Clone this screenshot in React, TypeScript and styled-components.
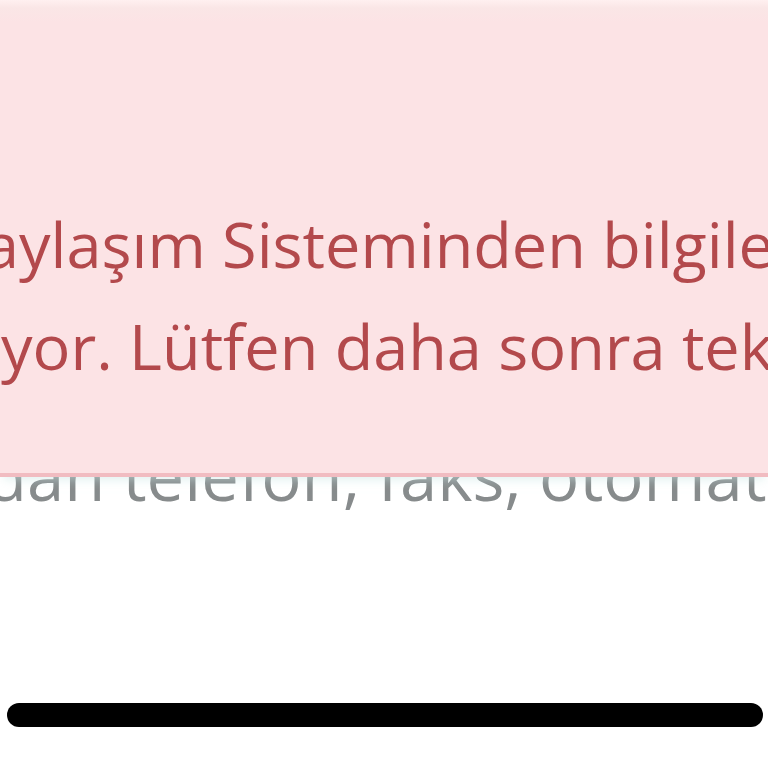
import React from "react";
import styled, { createGlobalStyle } from "styled-components";

const Global = createGlobalStyle`
  html, body { margin: 0; padding: 0; background: #ffffff; }
  body { font-family: "Open Sans", "Noto Sans", sans-serif; }
`;

const Screen = styled.div`
  position: relative;
  width: 768px;
  height: 768px;
  overflow: hidden;
  background: #ffffff;
`;

const Content = styled.div`
  display: flex;
  flex-direction: column;
  padding-top: 425px;
`;

const BodyLine = styled.div<{ $shift: number }>`
  white-space: nowrap;
  font-size: 67px;
  line-height: 100px;
  color: #878b8c;
  margin-left: ${(p) => p.$shift}px;
`;

const Alert = styled.div`
  position: absolute;
  top: 0;
  left: 0;
  right: 0;
  height: 477px;
  box-sizing: border-box;
  background: linear-gradient(#fff0f0 0px, #fae6e6 8px, #fce3e5 22px, #fce3e5 100%);
  border-bottom: 4px solid #f1bcc1;
  box-shadow: 0 6px 10px -4px rgba(200, 230, 226, 0.6);
  display: flex;
  flex-direction: column;
  padding-top: 193px;
`;

const AlertLine = styled.div<{ $shift: number }>`
  white-space: nowrap;
  font-size: 63px;
  line-height: 102px;
  color: #b3494c;
  margin-left: ${(p) => p.$shift}px;
`;

const HomeIndicator = styled.div`
  position: absolute;
  left: 7px;
  right: 5px;
  top: 703px;
  height: 24px;
  border-radius: 12px;
  background: #000000;
`;

export default function App() {
  return (
    <>
      <Global />
      <Screen>
        <Content>
          <BodyLine $shift={-14}>dan telefon, faks, otomatik arama</BodyLine>
        </Content>
        <Alert>
          <AlertLine $shift={-16}>aylaşım Sisteminden bilgileri</AlertLine>
          <AlertLine $shift={1}>yor. Lütfen daha sonra tekrar deneyiniz.</AlertLine>
        </Alert>
        <HomeIndicator />
      </Screen>
    </>
  );
}
